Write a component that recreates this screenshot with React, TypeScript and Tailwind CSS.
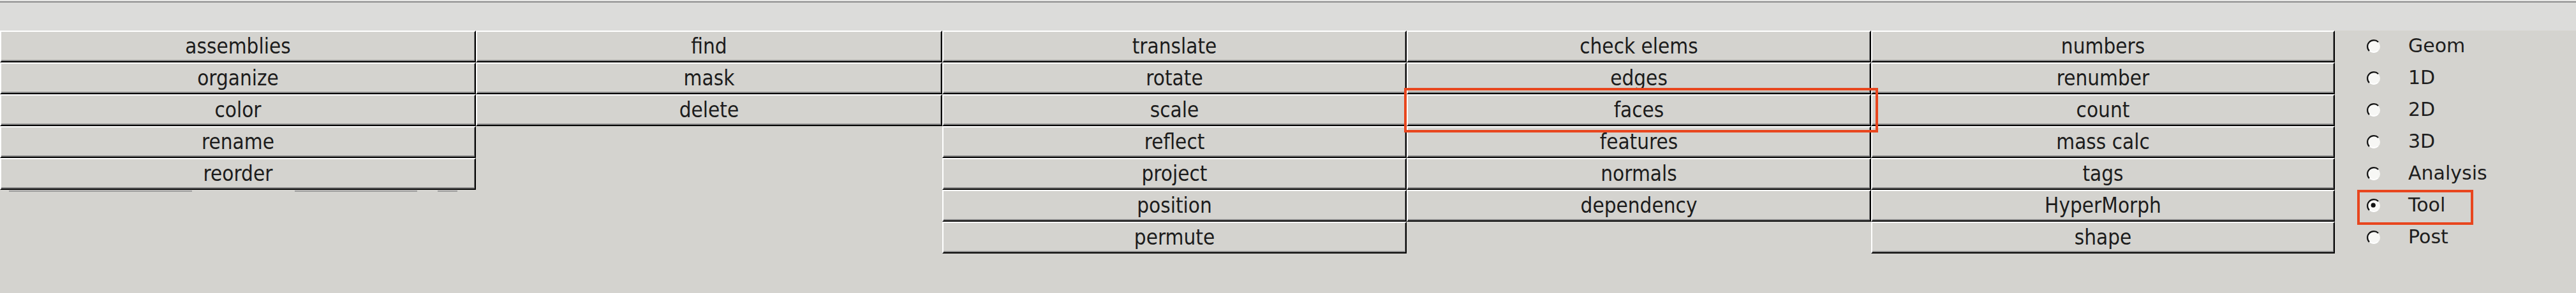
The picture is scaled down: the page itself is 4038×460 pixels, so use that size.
import React from 'react'

// panel columns, top to bottom
const columns: { width: string; items: string[] }[] = [
    { width: 'w-[746px]', items: ['assemblies', 'organize', 'color', 'rename', 'reorder'] },
    { width: 'w-[731px]', items: ['find', 'mask', 'delete'] },
    { width: 'w-[728px]', items: ['translate', 'rotate', 'scale', 'reflect', 'project', 'position', 'permute'] },
    { width: 'w-[728px]', items: ['check elems', 'edges', 'faces', 'features', 'normals', 'dependency'] },
    { width: 'w-[727px]', items: ['numbers', 'renumber', 'count', 'mass calc', 'tags', 'HyperMorph', 'shape'] },
]

const pages = ['Geom', '1D', '2D', '3D', 'Analysis', 'Tool', 'Post']

function PanelButton({ label }: { label: string }) {
    return (
        <div className="h-[50px] flex items-center justify-center border-t-2 border-l-2 border-b-2 border-r-2 border-t-white border-l-white border-b-black border-r-black shadow-[inset_0_-2px_0_#8a8a8a,inset_-1px_0_0_#8a8a8a] bg-[#d4d3cf] font-['DejaVu_Sans_Condensed','DejaVu_Sans',sans-serif] font-stretch-condensed text-[33px] leading-none text-[#1c1c1c] pb-[2px]">
            {label}
        </div>
    )
}

function Radio({ checked }: { checked: boolean }) {
    return (
        <svg width="24" height="24" viewBox="0 0 24 24" className="shrink-0">
            <circle cx="12" cy="12" r="10" fill="#f7f7f5" />
            <path d="M 18.4 18.4 A 9 9 0 0 1 5.6 18.4" fill="none" stroke="#ffffff" strokeWidth="2" />
            <path d="M 4.93 19.07 A 10 10 0 0 1 19.07 4.93" fill="none" stroke="#111" strokeWidth="2.2" />
            {checked && <circle cx="11.2" cy="11.2" r="3.6" fill="#111" />}
        </svg>
    )
}

export default function App() {
    return (
        <div className="relative w-[4038px] h-[460px] overflow-hidden bg-[#d4d3cf] font-['DejaVu_Sans',sans-serif]">
            {/* top strip */}
            <div className="h-[2px] bg-[#e6e6e4]" />
            <div className="h-[2px] bg-[#8c8c8c]" />
            <div className="h-[44px] bg-[#dcdcda]" />

            <div className="flex">
                {columns.map((col, i) => (
                    <div key={i} className={`${col.width} flex flex-col`}>
                        {col.items.map(item => (
                            <PanelButton key={item} label={item} />
                        ))}
                        {i === 0 && (
                            <div className="flex h-[2px] mt-[1px]">
                                <div className="ml-[14px] w-[287px] bg-[#9a9a9a]" />
                                <div className="ml-[161px] w-[192px] bg-[#9a9a9a]" />
                                <div className="ml-[32px] w-[31px] bg-[#9a9a9a]" />
                            </div>
                        )}
                    </div>
                ))}

                <div className="flex-1 flex flex-col">
                    {pages.map(p => (
                        <div key={p} className="h-[50px] flex items-center pl-[49px]">
                            <Radio checked={p === 'Tool'} />
                            <span className="ml-[42px] text-[30px] leading-none text-[#1e1e1e] pb-[2px]">{p}</span>
                        </div>
                    ))}
                </div>
            </div>

            {/* highlight marks */}
            <div className="absolute left-[2201px] top-[138px] w-[743px] h-[70px] border-4 border-[#e8461e]" />
            <div className="absolute left-[3695px] top-[298px] w-[182px] h-[55px] border-4 border-[#e8461e]" />
        </div>
    )
}
